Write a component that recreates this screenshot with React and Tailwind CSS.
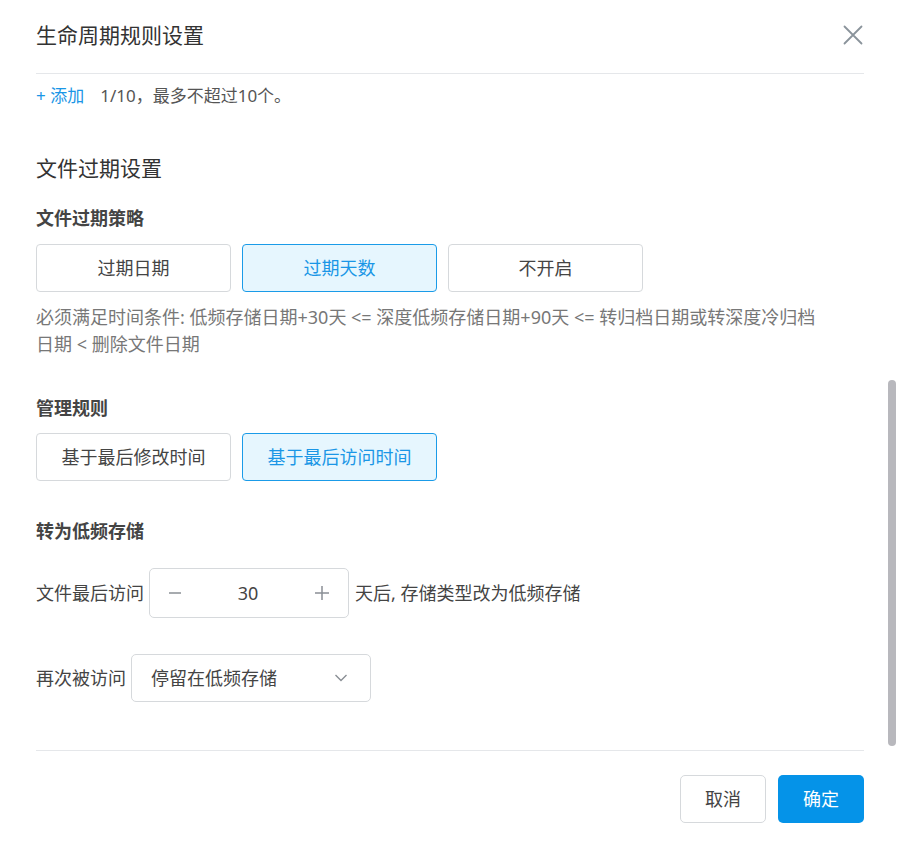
import React from "react";

const font = { fontFamily: '"Noto Sans", "Noto Sans CJK SC", sans-serif' };

function OptButton({ children, active, w = "w-[195px]" }) {
  return (
    <div
      className={
        "flex h-[48px] items-center justify-center rounded-[4px] border text-[18px] " +
        w +
        (active
          ? " border-[#1a9be8] bg-[#e6f6fe] text-[#1a96e6]"
          : " border-[#d6d9dc] bg-white text-[#444]")
      }
    >
      {children}
    </div>
  );
}

export default function App() {
  return (
    <div
      className="relative h-[844px] w-[900px] overflow-hidden bg-white text-[#333]"
      style={font}
    >
      <div className="flex h-full flex-col px-[36px]">
        {/* header */}
        <div className="flex h-[74px] shrink-0 items-center justify-between border-b border-[#e5e7ea] pb-[4px]">
          <div className="text-[21px] leading-[28px] text-[#333]">生命周期规则设置</div>
          <svg width="20" height="20" viewBox="0 0 20 20" className="mr-[1px]">
            <path d="M1.5 1.5 L18.5 18.5 M18.5 1.5 L1.5 18.5" stroke="#8a939b" strokeWidth="1.8" strokeLinecap="round" />
          </svg>
        </div>

        <div className="mt-[8px] flex h-[28px] items-center text-[17px] leading-[28px]">
          <span className="text-[#1a96e6]">+&nbsp;添加</span>
          <span className="ml-[16px] text-[#555]">1/10，最多不超过10个。</span>
        </div>

        <div className="mt-[43px] h-[30px] text-[21px] leading-[30px] text-[#333]">文件过期设置</div>

        <div className="mt-[22px] h-[26px] text-[18px] font-bold leading-[26px] text-[#444]">文件过期策略</div>

        <div className="mt-[13px] flex gap-[11px]">
          <OptButton>过期日期</OptButton>
          <OptButton active>过期天数</OptButton>
          <OptButton>不开启</OptButton>
        </div>

        <div className="mt-[12px] max-w-[790px] text-[18px] leading-[27px] text-[#777]">
          必须满足时间条件: 低频存储日期+30天 &lt;= 深度低频存储日期+90天 &lt;= 转归档日期或转深度冷归档日期 &lt; 删除文件日期
        </div>

        <div className="mt-[37px] h-[26px] text-[18px] font-bold leading-[26px] text-[#444]">管理规则</div>

        <div className="mt-[12px] flex gap-[11px]">
          <OptButton>基于最后修改时间</OptButton>
          <OptButton active>基于最后访问时间</OptButton>
        </div>

        <div className="mt-[37px] h-[26px] text-[18px] font-bold leading-[26px] text-[#444]">转为低频存储</div>

        <div className="mt-[24px] flex items-center text-[18px] text-[#444]">
          <span>文件最后访问</span>
          <div className="ml-[5px] flex h-[50px] w-[200px] items-center justify-between rounded-[5px] border border-[#d6d9dc] px-[18px]">
            <svg width="14" height="14" viewBox="0 0 14 14">
              <path d="M1 7 H13" stroke="#8a8f95" strokeWidth="1.5" />
            </svg>
            <span className="text-[18px] text-[#444]">30</span>
            <svg width="16" height="16" viewBox="0 0 16 16">
              <path d="M1 8 H15 M8 1 V15" stroke="#8a8f95" strokeWidth="1.5" />
            </svg>
          </div>
          <span className="ml-[6px]">天后, 存储类型改为低频存储</span>
        </div>

        <div className="mt-[36px] flex items-center text-[18px] text-[#444]">
          <span>再次被访问</span>
          <div className="ml-[5px] flex h-[48px] w-[240px] items-center justify-between rounded-[5px] border border-[#d6d9dc] pl-[19px] pr-[22px]">
            <span>停留在低频存储</span>
            <svg width="14" height="10" viewBox="0 0 14 10">
              <path d="M1.5 2 L7 7.5 L12.5 2" fill="none" stroke="#8a8f95" strokeWidth="1.4" />
            </svg>
          </div>
        </div>

        <div className="mt-[48px] border-t border-[#e5e7ea]" />

        <div className="mt-[24px] flex justify-end gap-[12px]">
          <div className="flex h-[48px] w-[86px] items-center justify-center rounded-[5px] border border-[#d6d9dc] text-[18px] text-[#444]">
            取消
          </div>
          <div className="flex h-[48px] w-[86px] items-center justify-center rounded-[5px] bg-[#0593e8] text-[18px] text-white">
            确定
          </div>
        </div>
      </div>

      <div className="absolute right-[4px] top-[380px] h-[366px] w-[8px] rounded-full bg-[#b8b8bd]" />
    </div>
  );
}
